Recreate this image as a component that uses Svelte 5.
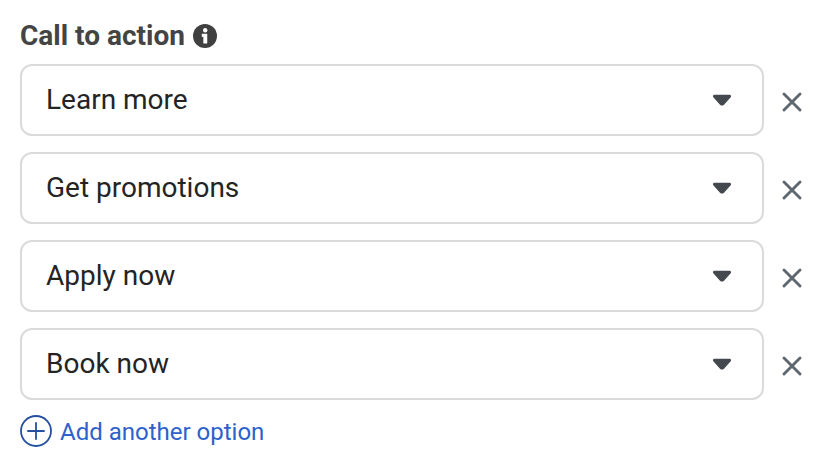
<script lang="ts">
	let options = $state(['Learn more', 'Get promotions', 'Apply now', 'Book now'])

	function removeOption(index: number) {
		options.splice(index, 1)
	}

	function addOption() {
		options.push('Learn more')
	}
</script>

<main>
	<div class="heading">
		<h2>Call to action</h2>
		<svg class="info" width="24" height="24" viewBox="0 0 24 24">
			<circle cx="12" cy="12" r="12" fill="#404040" />
			<circle cx="12.2" cy="6.3" r="2.200" fill="#fff" />
			<path d="M9 10h5v9.200h-3.400v-6.500H9z" fill="#fff" stroke="#fff" stroke-width=".5" stroke-linejoin="round" />
		</svg>
	</div>

	<div class="options">
		{#each options as option, i}
			<div class="row">
				<button class="select">
					<span>{option}</span>
					<svg class="arrow" width="20" height="12" viewBox="0 0 20 12">
						<path d="M2.300 .8h15.400q2.300 .6 .8 2.800L12 10.700q-2 1.700-4 0L1.500 3.600q-1.500-2.200 .8-2.800z" fill="#444950" />
					</svg>
				</button>
				<button class="remove" aria-label="Remove" onclick={() => removeOption(i)}>
					<svg width="20" height="20" viewBox="0 0 20 20">
						<path d="M2 2l16 16M18 2L2 18" stroke="#606770" stroke-width="2.900" stroke-linecap="round" />
					</svg>
				</button>
			</div>
		{/each}
	</div>

	<button class="add" onclick={addOption}>
		<svg width="32" height="32" viewBox="0 0 32 32">
			<circle cx="16" cy="16" r="15" fill="none" stroke="#24509f" stroke-width="1.800" />
			<path d="M16 8v16M8 16h16" stroke="#24509f" stroke-width="1.800" stroke-linecap="round" />
		</svg>
		<span>Add another option</span>
	</button>
</main>

<style>
	:global(body) {
		background: #fff;
	}

	main {
		box-sizing: border-box;
		height: 466px;
		padding: 16px 20px 0;
		font-family: Roboto, sans-serif;
	}

	button {
		padding: 0;
		border: none;
		background: none;
		font-family: inherit;
		cursor: pointer;
	}

	svg {
		display: block;
		flex: none;
	}

	.heading {
		display: flex;
		align-items: center;
		gap: 8px;
		height: 40px;
	}

	h2 {
		margin: 0;
		font-size: 28px;
		line-height: 40px;
		font-weight: 700;
		color: #444444;
	}

	.options {
		display: flex;
		flex-direction: column;
		gap: 16px;
		margin-top: 8px;
	}

	.row {
		display: flex;
		align-items: center;
		gap: 18px;
	}

	.select {
		box-sizing: border-box;
		display: flex;
		align-items: center;
		justify-content: space-between;
		width: 744px;
		height: 72px;
		padding: 0 30px 2px 24px;
		border: 2px solid #dadada;
		border-radius: 12px;
		font-size: 28px;
		color: #242424;
	}

	.arrow {
		margin-top: 2px;
	}

	.remove {
		margin-top: 4px;
	}

	.add {
		display: flex;
		align-items: center;
		gap: 8px;
		margin-top: 15px;
		font-size: 24px;
		color: #2d61cd;
	}

	.add span {
		padding-top: 2px;
	}
</style>
